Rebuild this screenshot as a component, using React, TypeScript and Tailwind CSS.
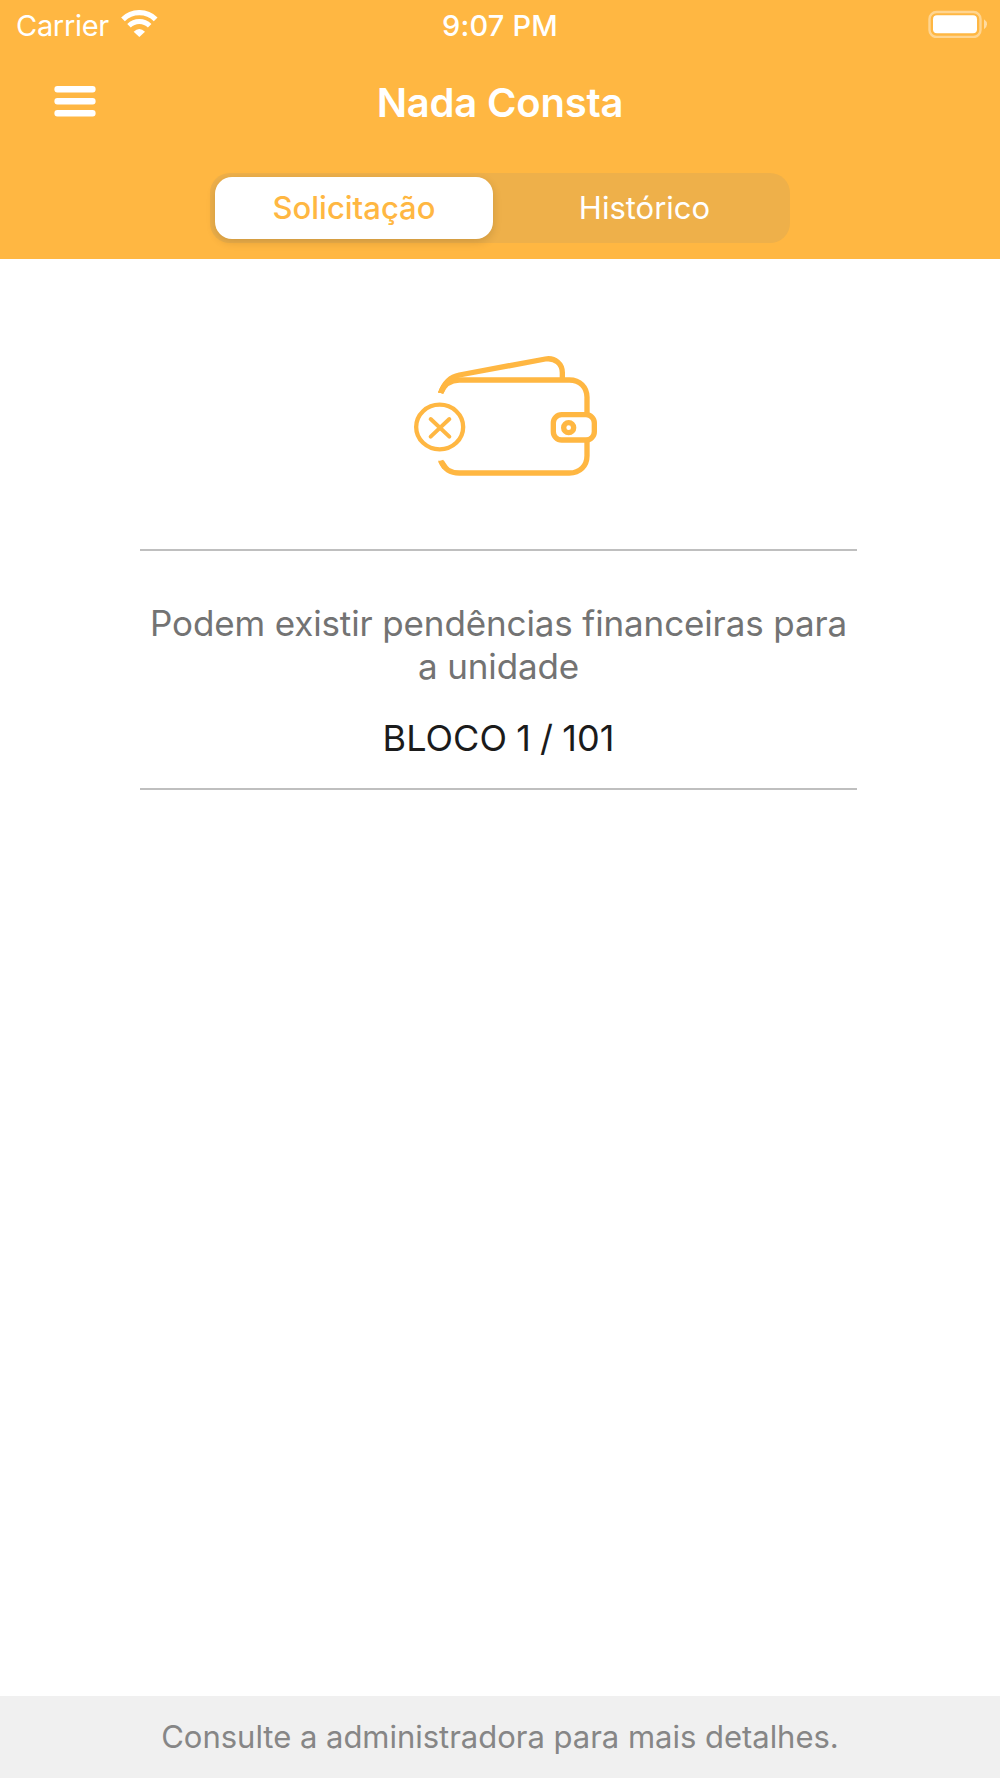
function WifiIcon() {
  return (
    <svg width="37" height="27" viewBox="0 0 111 81" fill="none" className="block">
      <path d="M6 28 A70 70 0 0 1 104 28" stroke="#fff" strokeWidth="16" />
      <path d="M24 47 A44 44 0 0 1 86 47" stroke="#fff" strokeWidth="15" />
      <path d="M38 65 Q55 49 72 65 L55 81 Z" fill="#fff" />
    </svg>
  );
}

function BatteryIcon() {
  return (
    <svg width="60" height="28" viewBox="0 0 60 28" fill="none" className="block">
      <rect x="1.5" y="2" width="51" height="25" rx="7" stroke="#fff" strokeOpacity=".42" strokeWidth="2.4" />
      <rect x="5" y="5.3" width="44" height="18" rx="4" fill="#fff" />
      <path d="M56 9.3 Q59 11.3 59 14.3 Q59 17.3 56 19.3 Z" fill="#fff" fillOpacity=".5" />
    </svg>
  );
}

function MenuIcon() {
  return (
    <svg width="42" height="32" viewBox="0 0 42 32" className="block" fill="#fff">
      <rect x=".4" y=".1" width="41.2" height="6.4" rx="3" />
      <rect x=".4" y="12.1" width="41.2" height="6.4" rx="3" />
      <rect x=".4" y="24.1" width="41.2" height="6.4" rx="3" />
    </svg>
  );
}

function WalletIcon() {
  return (
    <svg width="210" height="150" viewBox="0 0 630 450" fill="none" stroke="#ffb742" strokeWidth="16" className="block">
      <path d="M122 159 C132 134 152 120 178 120 H508 C540 120 561 142 561 172 V224" />
      <path d="M122 362 C132 386 152 399 178 399 H508 C540 399 561 377 561 347 V300" />
      <path d="M122 159 C132 130 152 110 178 105 L436 57 C466 52 487 72 487 98 V120" />
      <path d="M114 159 C120 140 130 125 145 113 L165 120 C148 126 136 140 131 159 Z" fill="#ffb742" stroke="none" />
      <path d="M114 362 H132 L142 377 L128 387 Z" fill="#ffb742" stroke="none" />
      <rect x="460" y="224" width="123" height="76" rx="25" />
      <circle cx="506" cy="263" r="15" />
      <ellipse cx="119" cy="261" rx="70.5" ry="67" strokeWidth="13" />
      <path d="M92 237 L148 290 M148 237 L92 290" strokeWidth="12" strokeLinecap="round" />
    </svg>
  );
}

export default function App() {
  return (
    <div className="flex h-[1778px] w-[1000px] flex-col overflow-hidden bg-white font-['Inter',sans-serif]">
      <header className="h-[258.5px] shrink-0 bg-[#ffb742] text-white">
        <div className="grid h-[50px] grid-cols-3 items-start">
          <div className="flex pl-4">
            <span className="w-[104px] pt-[8px] text-[29px] leading-[36px] tracking-[-0.3px] whitespace-nowrap">
              Carrier
            </span>
            <div className="pt-[10px] pl-[0.5px]">
              <WifiIcon />
            </div>
          </div>
          <span className="pt-[8px] text-center text-[29px] leading-[36px] font-medium tracking-[0.2px]">9:07 PM</span>
          <div className="flex justify-end pt-[10px] pr-[12px]">
            <BatteryIcon />
          </div>
        </div>
        <div className="grid h-[123px] grid-cols-[1fr_auto_1fr]">
          <button className="self-start pt-[36px] pl-[54px]">
            <MenuIcon />
          </button>
          <h1 className="pt-[28px] text-[40px] leading-[50px] font-semibold tracking-[-0.2px]">Nada Consta</h1>
        </div>
        <div className="mx-auto flex h-[70px] w-[580px] rounded-[20px] bg-[#eeb04a] py-1 pr-1 pl-[5px]">
          <button className="h-[62px] w-[278px] rounded-[17px] bg-white text-[31px] font-medium text-[#ffb742] shadow-[0_3px_10px_rgba(0,0,0,0.14)]">
            Solicitação
          </button>
          <button className="flex-1 pl-[10px] text-[31px]">Histórico</button>
        </div>
      </header>

      <main className="flex flex-1 flex-col items-center pt-[81.5px]">
        <div className="w-[200px]">
          <WalletIcon />
        </div>
        <section className="mt-[59px] mr-[3px] h-[241px] w-[717px] border-y-2 border-[#bfbfbf] text-center text-[35px] leading-[43px]">
          <p className="pt-[51px] tracking-[-0.13px] text-[#737373]">
            Podem existir pendências financeiras para
            <br />a unidade
          </p>
          <p className="pt-[29px] text-[36px] tracking-[0.05px] text-[#1b1b1b] [word-spacing:-1px]">BLOCO 1 / 101</p>
        </section>
      </main>

      <footer className="h-[82px] shrink-0 bg-[#f0f0f0] pt-[21px] text-center text-[31px] leading-[40px] tracking-[-0.02px] text-[#868686]">
        Consulte a administradora para mais detalhes.
      </footer>
    </div>
  );
}
